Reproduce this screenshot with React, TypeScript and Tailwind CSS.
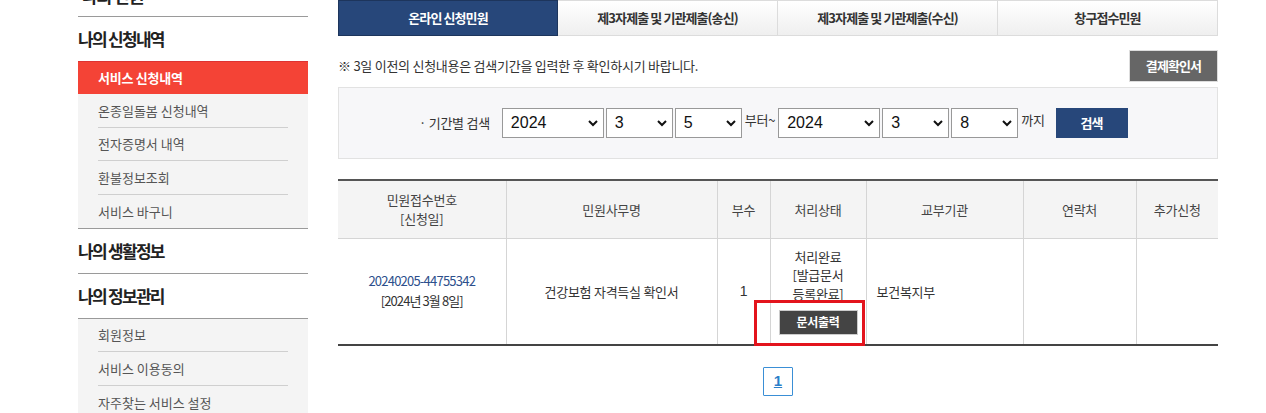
import React from "react";

const SubItem = ({ label, last, h }: { label: string; last?: boolean; h: string }) => (
  <div className="px-5 bg-[#f4f4f4]">
    <div className={`${h} flex items-center text-[13px] text-[#555] tracking-[0em] ${last ? "" : "border-b border-[#cfcfcf]"}`}>
      {label}
    </div>
  </div>
);

const Sel = ({ value, w }: { value: string; w: string }) => (
  <div className={`${w} h-[30px] bg-white border border-[#999] flex items-center justify-between pl-[8px] pr-[4px] font-['Liberation_Sans',sans-serif] text-[16px] text-[#111]`}>
    <span>{value}</span>
    <svg width="12" height="12" viewBox="0 0 12 12">
      <path d="M2 4 L6 8 L10 4" fill="none" stroke="#111" strokeWidth="2" />
    </svg>
  </div>
);

export default function App() {
  return (
    <div className="w-[1266px] h-[413px] overflow-hidden bg-white flex items-start font-['Noto_Sans_CJK_KR','Noto_Sans',sans-serif] text-[#333]">
      {/* Sidebar */}
      <aside className="ml-[78px] w-[230px] shrink-0 block">
        <div className="h-[17px] border-b border-[#9a9a9a] overflow-hidden">
          <div className="text-[17px] font-bold text-[#222] tracking-[-0.06em] leading-[17px] -mt-[13px] pl-[4px]">나의 민원</div>
        </div>
        <div className="h-[44px] flex items-center text-[17px] font-bold text-[#222] tracking-[-0.1em]">나의 신청내역</div>
        <div className="h-[33px] bg-[#f44336] border-t border-[#d33] flex items-center pl-5 text-[13px] font-bold text-white tracking-[-0.02em]">서비스 신청내역</div>
        <SubItem label="온종일돌봄 신청내역" h="h-[34px]" />
        <SubItem label="전자증명서 내역" h="h-[33px]" />
        <SubItem label="환불정보조회" h="h-[34px]" />
        <SubItem label="서비스 바구니" h="h-[33px]" last />
        <div className="h-[45px] border-t border-[#9a9a9a] flex items-center text-[17px] font-bold text-[#222] tracking-[-0.1em]">나의 생활정보</div>
        <div className="h-[45px] border-t border-[#9a9a9a] flex items-center text-[17px] font-bold text-[#222] tracking-[-0.1em]">나의 정보관리</div>
        <div className="border-t border-[#9a9a9a]">
          <SubItem label="회원정보" h="h-[33px]" />
          <SubItem label="서비스 이용동의" h="h-[34px]" />
          <SubItem label="자주찾는 서비스 설정" h="h-[34px]" />
        </div>
      </aside>

      {/* Main */}
      <main className="ml-[30px] w-[880px] shrink-0 flex flex-col">
        {/* Tabs */}
        <div className="grid grid-cols-4 h-[36px] shrink-0">
          <div className="bg-[#27477a] border border-[#1d355c] flex items-center justify-center text-white text-[13px] font-bold tracking-[-0.07em]">온라인 신청민원</div>
          <div className="bg-gradient-to-b from-white to-[#efefef] border-y border-r border-[#dcdcdc] flex items-center justify-center text-[13px] font-bold text-[#333] tracking-[-0.07em]">제3자제출 및 기관제출(송신)</div>
          <div className="bg-gradient-to-b from-white to-[#efefef] border-y border-r border-[#dcdcdc] flex items-center justify-center text-[13px] font-bold text-[#333] tracking-[-0.07em]">제3자제출 및 기관제출(수신)</div>
          <div className="bg-gradient-to-b from-white to-[#efefef] border-y border-r border-[#dcdcdc] flex items-center justify-center text-[13px] font-bold text-[#333] tracking-[-0.07em]">창구접수민원</div>
        </div>

        {/* Notice */}
        <div className="mt-[14px] flex items-center justify-between shrink-0">
          <p className="text-[13px] text-[#333] tracking-[-0.02em]">※ 3일 이전의 신청내용은 검색기간을 입력한 후 확인하시기 바랍니다.</p>
          <button className="w-[89px] h-[32px] bg-[#666] border border-[#ddd] text-white text-[13px] font-bold tracking-[-0.07em]">결제확인서</button>
        </div>

        {/* Search */}
        <div className="mt-[5px] h-[72px] shrink-0 bg-[#f7f7f9] border border-[#e2e2e2] flex items-center pl-[80px]">
          <span className="text-[13px] text-[#333] tracking-[-0.02em] mr-[12px]">· 기간별 검색</span>
          <div className="flex items-center gap-[2px]">
            <Sel value="2024" w="w-[102px]" />
            <Sel value="3" w="w-[67px]" />
            <Sel value="5" w="w-[67px]" />
            <span className="text-[13px] text-[#333] tracking-[-0.02em] mx-[1px] -mt-[6px]">부터~</span>
            <Sel value="2024" w="w-[102px]" />
            <Sel value="3" w="w-[67px]" />
            <Sel value="8" w="w-[67px]" />
            <span className="text-[13px] text-[#333] tracking-[-0.02em] ml-[1px] -mt-[6px]">까지</span>
          </div>
          <button className="ml-[11px] w-[72px] h-[30px] bg-[#27477a] text-white text-[13px] font-bold tracking-[-0.07em]">검색</button>
        </div>

        {/* Table */}
        <table className="mt-[20px] w-[880px] border-collapse table-fixed text-[13px] tracking-[-0.02em]">
          <colgroup>
            <col className="w-[168px]" />
            <col className="w-[211px]" />
            <col className="w-[53px]" />
            <col className="w-[96px]" />
            <col className="w-[157px]" />
            <col className="w-[113px]" />
            <col className="w-[82px]" />
          </colgroup>
          <thead>
            <tr className="h-[58px] bg-[#f4f4f4] border-t-2 border-[#555] text-[#444]">
              <th className="font-normal border-r border-b border-[#d5d5d5] leading-[19px]">민원접수번호<br />[신청일]</th>
              <th className="font-normal border-r border-b border-[#d5d5d5]">민원사무명</th>
              <th className="font-normal border-r border-b border-[#d5d5d5]">부수</th>
              <th className="font-normal border-r border-b border-[#d5d5d5]">처리상태</th>
              <th className="font-normal border-r border-b border-[#d5d5d5]">교부기관</th>
              <th className="font-normal border-r border-b border-[#d5d5d5]">연락처</th>
              <th className="font-normal border-b border-[#d5d5d5]">추가신청</th>
            </tr>
          </thead>
          <tbody>
            <tr className="h-[107px] border-b-2 border-[#444] text-[#333]">
              <td className="text-center border-r border-[#d5d5d5] leading-[20px]">
                <span className="text-[#2d4f8c] tracking-[-0.06em]">20240205-44755342</span>
                <br />
                <span className="tracking-[-0.07em]">[2024년 3월 8일]</span>
              </td>
              <td className="text-center border-r border-[#d5d5d5]">건강보험 자격득실 확인서</td>
              <td className="text-center border-r border-[#d5d5d5] font-['Liberation_Sans',sans-serif] text-[14px]">1</td>
              <td className="relative text-center border-r border-[#d5d5d5] leading-[18.5px]">
                <div className="flex flex-col items-center">
                  <span>처리완료</span>
                  <span>[발급문서</span>
                  <span>등록완료]</span>
                  <button className="mt-[7px] w-[79px] h-[25px] bg-[#444] border border-[#ccc] text-white text-[12px] font-bold">문서출력</button>
                </div>
                <div className="absolute left-[-17px] top-[61px] w-[111px] h-[46px] border-[3px] border-[#e3141d] pointer-events-none" />
              </td>
              <td className="border-r border-[#d5d5d5] pl-[10px]">보건복지부</td>
              <td className="border-r border-[#d5d5d5]"></td>
              <td></td>
            </tr>
          </tbody>
        </table>

        {/* Pagination */}
        <div className="mt-[21px] flex justify-center shrink-0">
          <div className="w-[30px] h-[29px] border border-[#3a8fd6] rounded-[1px] flex items-center justify-center text-[#2b7fc9] font-bold underline font-['Liberation_Sans',sans-serif] text-[15px]">1</div>
        </div>
      </main>
    </div>
  );
}
